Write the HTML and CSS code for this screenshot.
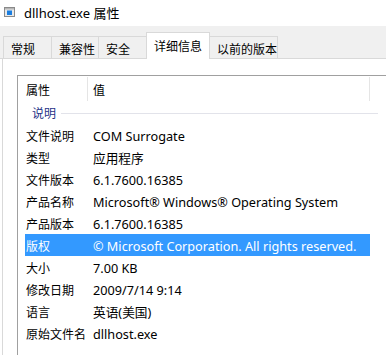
FILE: index.html
```html
<!DOCTYPE html>
<html lang="zh-CN">
<head>
  <meta charset="UTF-8">
  <title>dllhost.exe 属性</title>
  <link rel="stylesheet" href="styles.css">
</head>
<body>
  <div class="titlebar">
    <svg class="app-icon" width="11" height="10" viewBox="0 0 11 10">
      <rect x="0.5" y="0.5" width="10" height="9" fill="#e8e8e8" stroke="#8a8a8a"/>
      <rect x="1" y="1" width="9" height="1.5" fill="#b5b5b5"/>
      <rect x="3" y="3.5" width="5" height="4.5" fill="#1a7ee0"/>
    </svg>
    <span class="title">dllhost.exe 属性</span>
  </div>

  <div class="tabs">
    <div class="tab t1">常规</div>
    <div class="tab t2">兼容性</div>
    <div class="tab t3">安全</div>
    <div class="tab t4 active">详细信息</div>
    <div class="tab t5">以前的版本</div>
  </div>

  <div class="panel">
    <div class="list">
      <div class="head">
        <div class="hcol name">属性</div>
        <div class="hcol value">值</div>
      </div>
      <div class="group"><span>说明</span><i></i></div>
      <div class="row"><span class="k">文件说明</span><span class="v">COM Surrogate</span></div>
      <div class="row"><span class="k">类型</span><span class="v">应用程序</span></div>
      <div class="row"><span class="k">文件版本</span><span class="v">6.1.7600.16385</span></div>
      <div class="row"><span class="k">产品名称</span><span class="v">Microsoft® Windows® Operating System</span></div>
      <div class="row"><span class="k">产品版本</span><span class="v">6.1.7600.16385</span></div>
      <div class="row selected"><span class="k">版权</span><span class="v">© Microsoft Corporation. All rights reserved.</span></div>
      <div class="row"><span class="k">大小</span><span class="v">7.00 KB</span></div>
      <div class="row"><span class="k">修改日期</span><span class="v">2009/7/14 9:14</span></div>
      <div class="row"><span class="k">语言</span><span class="v">英语(美国)</span></div>
      <div class="row"><span class="k">原始文件名</span><span class="v">dllhost.exe</span></div>
    </div>
  </div>
</body>
</html>
```

FILE: styles.css
```css
body {
  margin: 0;
  font-family: "Noto Sans", "Noto Sans CJK SC", sans-serif;
  font-size: 12px;
  color: #000;
  background: #fff;
  overflow: hidden;
}
.titlebar {
  height: 26px;
  display: flex;
  align-items: center;
  padding-left: 4px;
  background: #fff;
}
.app-icon {
  margin-top: -2px;
}
.title {
  margin-left: 9px;
  font-size: 13px;
  margin-top: -2px;
}
.tabs {
  height: 33px;
  background: #f0f0f0;
  display: flex;
  align-items: flex-end;
  padding-left: 3px;
  box-sizing: border-box;
  border-bottom: 1px solid #d9d9d9;
}
.tab {
  height: 22px;
  box-sizing: border-box;
  border: 1px solid #d9d9d9;
  border-bottom: none;
  margin-right: -1px;
  padding-left: 7px;
  line-height: 25px;
  background: #f0f0f0;
}
.t1 { width: 49px; }
.t2 { width: 48px; }
.t3 { width: 49px; }
.t4 { width: 64px; }
.t5 { width: 69px; }
.tab.active {
  height: 27px;
  margin-bottom: -1px;
  background: #fff;
  line-height: 27px;
  position: relative;
}
.panel {
  height: 296px;
  background: #fff;
  margin-left: 2px;
  border-left: 1px solid #d9d9d9;
  padding: 16px 0 0 14px;
  box-sizing: border-box;
}
.list {
  height: 100%;
  border-top: 1px solid #a0a0a0;
  border-left: 1px solid #a0a0a0;
}
.head {
  height: 26px;
  display: flex;
}
.hcol {
  height: 24px;
  margin-top: 1px;
  line-height: 27px;
  box-sizing: border-box;
  border-right: 1px solid #e5e5e5;
}
.hcol.name {
  width: 70px;
  padding-left: 8px;
}
.hcol.value {
  width: 282px;
  padding-left: 5px;
}
.group {
  height: 22px;
  display: flex;
  align-items: center;
  padding-left: 14px;
  color: #1e3287;
}
.group i {
  flex: none;
  width: 317px;
  height: 1px;
  background: #e2e3ea;
  margin-left: 5px;
}
.row {
  height: 22px;
  width: 345px;
  margin-left: 7px;
  display: flex;
  align-items: center;
  white-space: nowrap;
  padding-top: 1px;
  box-sizing: border-box;
}
.row .k {
  width: 68px;
  padding-left: 1px;
  box-sizing: border-box;
  flex: none;
}
.row .v {
  font-size: 12.7px;
}
.row.selected {
  background: #3399ff;
  color: #fff;
}
```
